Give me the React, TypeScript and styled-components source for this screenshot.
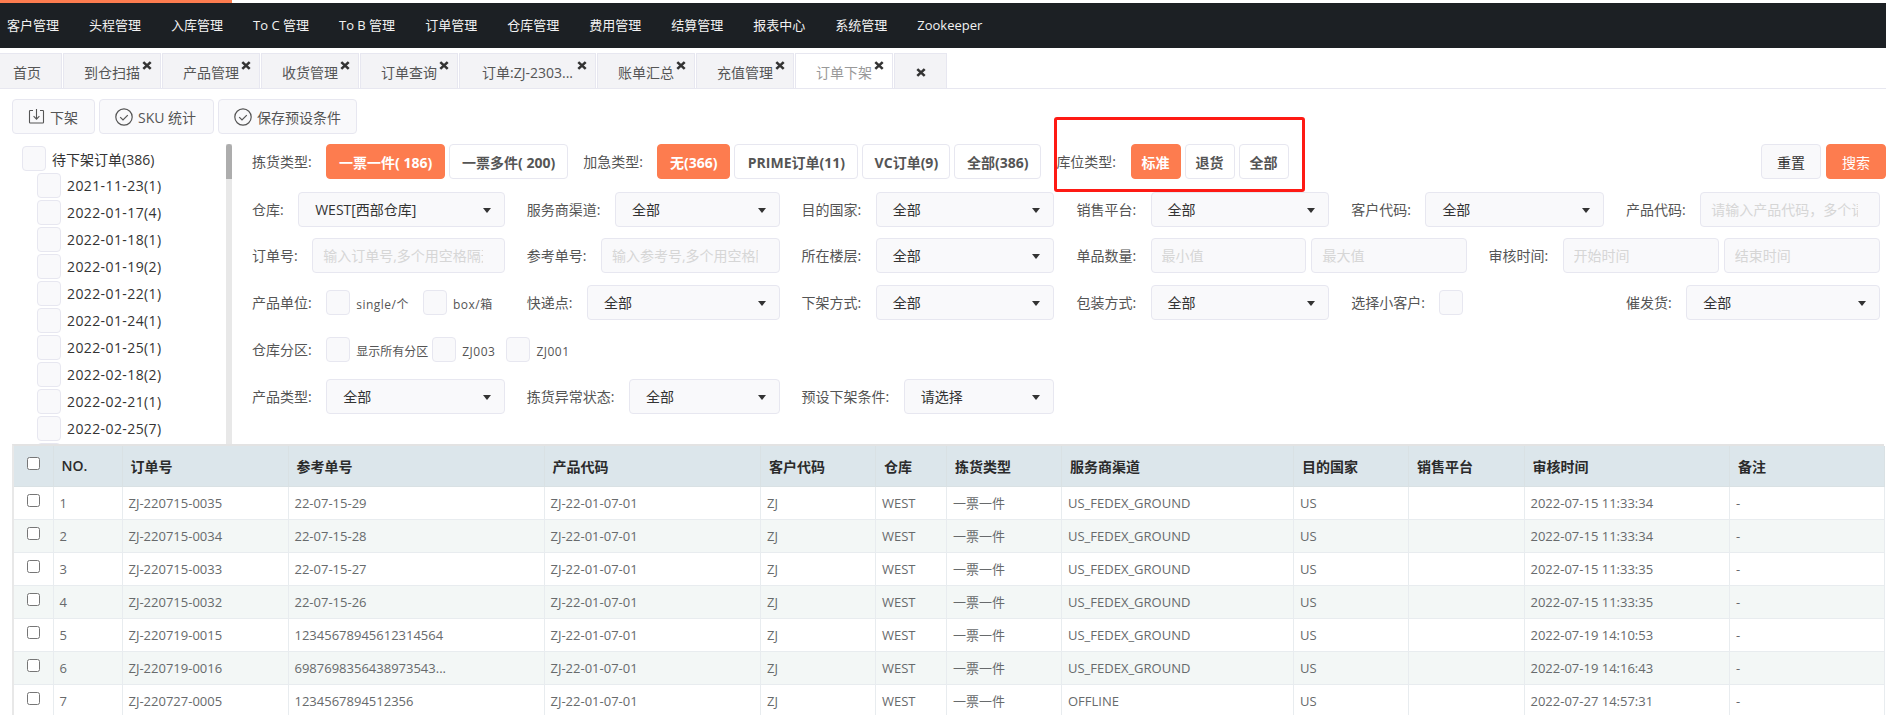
import React from "react";
import styled, { createGlobalStyle } from "styled-components";

const ORANGE = "#fd7c4f";
const LINE = "#e7e7f0";
const FIELD_BG = "#f9f9fb";

const GlobalStyle = createGlobalStyle`
  * {
    box-sizing: border-box;
  }
  html, body {
    margin: 0;
    height: 100%;
    overflow: hidden;
    background: #fff;
  }
  body {
    font-family: "Open Sans", "Noto Sans CJK SC", sans-serif;
    font-size: 14px;
    color: #333;
  }
`;

const menus = ["客户管理", "头程管理", "入库管理", "To C 管理", "To B 管理", "订单管理", "仓库管理", "费用管理", "结算管理", "报表中心", "系统管理", "Zookeeper"];

const tabs = [
  { name: "到仓扫描", width: 98 },
  { name: "产品管理", width: 98 },
  { name: "收货管理", width: 98 },
  { name: "订单查询", width: 98 },
  { name: "订单:ZJ-2303...", width: 137 },
  { name: "账单汇总", width: 98 },
  { name: "充值管理", width: 98 },
  { name: "订单下架", width: 98, active: true },
];

const treeDates = ["2021-11-23(1)", "2022-01-17(4)", "2022-01-18(1)", "2022-01-19(2)", "2022-01-22(1)", "2022-01-24(1)", "2022-01-25(1)", "2022-02-18(2)", "2022-02-21(1)", "2022-02-25(7)"];

const columns = [
  { title: "NO.", width: 69 },
  { title: "订单号", width: 166 },
  { title: "参考单号", width: 256 },
  { title: "产品代码", width: 216.5 },
  { title: "客户代码", width: 115 },
  { title: "仓库", width: 71 },
  { title: "拣货类型", width: 115 },
  { title: "服务商渠道", width: 232 },
  { title: "目的国家", width: 115 },
  { title: "销售平台", width: 115.5 },
  { title: "审核时间", width: 205.5 },
  { title: "备注", width: 155 },
];

const orders = [
  ["ZJ-220715-0035", "22-07-15-29", "US_FEDEX_GROUND", "2022-07-15 11:33:34"],
  ["ZJ-220715-0034", "22-07-15-28", "US_FEDEX_GROUND", "2022-07-15 11:33:34"],
  ["ZJ-220715-0033", "22-07-15-27", "US_FEDEX_GROUND", "2022-07-15 11:33:35"],
  ["ZJ-220715-0032", "22-07-15-26", "US_FEDEX_GROUND", "2022-07-15 11:33:35"],
  ["ZJ-220719-0015", "12345678945612314564", "US_FEDEX_GROUND", "2022-07-19 14:10:53"],
  ["ZJ-220719-0016", "6987698356438973543...", "US_FEDEX_GROUND", "2022-07-19 14:16:43"],
  ["ZJ-220727-0005", "1234567894512356", "OFFLINE", "2022-07-27 14:57:31"],
];

function CloseIcon() {
  return (
    <svg width="10" height="9" viewBox="0 0 10 9">
      <path d="M1.3 1.1 8.7 7.9M8.7 1.1 1.3 7.9" stroke="#333" strokeWidth="2.6" fill="none" />
    </svg>
  );
}

function TrayIcon() {
  return (
    <svg width="17" height="17" viewBox="0 0 17 17" fill="none" stroke="#555" strokeWidth="1.1">
      <path d="M5 2.5H2.2a.7.7 0 0 0-.7.7v11.1c0 .4.3.7.7.7h12.6c.4 0 .7-.3.7-.7V3.2a.7.7 0 0 0-.7-.7H12" />
      <path d="M8.5 1v10M5.6 8.2l2.9 2.9 2.9-2.9" />
    </svg>
  );
}

function CheckCircleIcon() {
  return (
    <svg width="18" height="18" viewBox="0 0 18 18" fill="none" stroke="#555" strokeWidth="1.2">
      <circle cx="9" cy="9" r="8.2" />
      <path d="M5.2 9.2 8 12l4.8-4.8" />
    </svg>
  );
}

function Select({ value }: { value: string }) {
  return <SelectBox>{value}</SelectBox>;
}

function Field({ label, children }: { label: string; children: React.ReactNode }) {
  return (
    <FieldCell>
      <FieldLabel>{label}:</FieldLabel>
      {children}
    </FieldCell>
  );
}

export default function App() {
  return (
    <Page>
      <GlobalStyle />
      <TopAccent />
      <Nav>
        {menus.map((m) => (
          <NavItem key={m}>{m}</NavItem>
        ))}
      </Nav>

      <TabBar>
        <HomeTab $width={62}>首页</HomeTab>
        {tabs.map((t) => (
          <Tab key={t.name} $width={t.width} $active={t.active}>
            {t.name}
            <TabClose>
              <CloseIcon />
            </TabClose>
          </Tab>
        ))}
        <Tab $width={53}>
          <CloseIcon />
        </Tab>
      </TabBar>

      <Toolbar>
        <ToolButton $width={83}>
          <TrayIcon />
          下架
        </ToolButton>
        <ToolButton $width={115}>
          <CheckCircleIcon />
          SKU 统计
        </ToolButton>
        <ToolButton $width={139}>
          <CheckCircleIcon />
          保存预设条件
        </ToolButton>
      </Toolbar>

      <Main>
        <Sidebar>
          <Tree>
            <TreeRow>
              <CheckBox />
              <TreeText>待下架订单(386)</TreeText>
            </TreeRow>
            {treeDates.map((d) => (
              <TreeRow key={d} $child>
                <CheckBox />
                <TreeDate>{d}</TreeDate>
              </TreeRow>
            ))}
            <TreeRow $child>
              <CheckBox />
            </TreeRow>
          </Tree>
          <ScrollTrack>
            <ScrollThumb />
          </ScrollTrack>
        </Sidebar>

        <Filters>
          <ButtonRow>
            <FieldLabel>拣货类型:</FieldLabel>
            <ChoiceGroup>
              <Choice $width={119} $active>一票一件( 186)</Choice>
              <Choice $width={119}>一票多件( 200)</Choice>
            </ChoiceGroup>
            <FieldLabel>加急类型:</FieldLabel>
            <ChoiceGroup>
              <Choice $width={73} $active>无(366)</Choice>
              <Choice $width={124}>PRIME订单(11)</Choice>
              <Choice $width={88}>VC订单(9)</Choice>
              <Choice $width={87}>全部(386)</Choice>
            </ChoiceGroup>
            <FieldLabel>库位类型:</FieldLabel>
            <ChoiceGroup>
              <Choice $width={50} $active>标准</Choice>
              <Choice $width={50}>退货</Choice>
              <Choice $width={50}>全部</Choice>
            </ChoiceGroup>
            <Actions>
              <PlainButton>重置</PlainButton>
              <PrimaryButton>搜索</PrimaryButton>
            </Actions>
          </ButtonRow>

          <FieldRow $after={11}>
            <Field label="仓库"><Select value="WEST[西部仓库]" /></Field>
            <Field label="服务商渠道"><Select value="全部" /></Field>
            <Field label="目的国家"><Select value="全部" /></Field>
            <Field label="销售平台"><Select value="全部" /></Field>
            <Field label="客户代码"><Select value="全部" /></Field>
            <Field label="产品代码"><TextInput placeholder="请输入产品代码，多个请用空格隔开" /></Field>
          </FieldRow>

          <FieldRow>
            <Field label="订单号"><TextInput placeholder="输入订单号,多个用空格隔开" /></Field>
            <Field label="参考单号"><TextInput placeholder="输入参考号,多个用空格隔开" /></Field>
            <Field label="所在楼层"><Select value="全部" /></Field>
            <WideCell>
              <QuantityField>
                <FieldLabel>单品数量:</FieldLabel>
                <RangeInputs>
                  <TextInput placeholder="最小值" />
                  <TextInput placeholder="最大值" />
                </RangeInputs>
              </QuantityField>
              <FieldLabel>审核时间:</FieldLabel>
              <RangeInputs>
                <TextInput placeholder="开始时间" />
                <TextInput placeholder="结束时间" />
              </RangeInputs>
            </WideCell>
          </FieldRow>

          <FieldRow>
            <Field label="产品单位">
              <CheckBox />
              <CheckText $after={14} $spaced>single/个</CheckText>
              <CheckBox />
              <CheckText $spaced>box/箱</CheckText>
            </Field>
            <Field label="快递点"><Select value="全部" /></Field>
            <Field label="下架方式"><Select value="全部" /></Field>
            <Field label="包装方式"><Select value="全部" /></Field>
            <Field label="选择小客户"><CheckBox /></Field>
            <Field label="催发货"><Select value="全部" /></Field>
          </FieldRow>

          <PlainRow>
            <FieldLabel>仓库分区:</FieldLabel>
            <CheckBox />
            <CheckText $after={4}>显示所有分区</CheckText>
            <CheckBox />
            <CheckText $after={11} $spaced>ZJ003</CheckText>
            <CheckBox />
            <CheckText $spaced>ZJ001</CheckText>
          </PlainRow>

          <FieldRow>
            <Field label="产品类型"><Select value="全部" /></Field>
            <Field label="拣货异常状态"><Select value="全部" /></Field>
            <Field label="预设下架条件"><Select value="请选择" /></Field>
          </FieldRow>

          <Highlight />
        </Filters>
      </Main>

      <TableWrap>
        <OrderTable>
          <colgroup>
            <col style={{ width: 39 }} />
            {columns.map((c) => (
              <col key={c.title} style={{ width: c.width }} />
            ))}
          </colgroup>
          <thead>
            <tr>
              <HeadCell>
                <RowCheck type="checkbox" />
              </HeadCell>
              {columns.map((c) => (
                <HeadCell key={c.title}>{c.title}</HeadCell>
              ))}
            </tr>
          </thead>
          <tbody>
            {orders.map((o, i) => (
              <BodyRow key={o[0]} $striped={i % 2 === 1}>
                <BodyCell>
                  <RowCheck type="checkbox" />
                </BodyCell>
                <BodyCell>{i + 1}</BodyCell>
                <BodyCell>{o[0]}</BodyCell>
                <BodyCell>{o[1]}</BodyCell>
                <BodyCell>ZJ-22-01-07-01</BodyCell>
                <BodyCell>ZJ</BodyCell>
                <BodyCell>WEST</BodyCell>
                <BodyCell>一票一件</BodyCell>
                <BodyCell>{o[2]}</BodyCell>
                <BodyCell>US</BodyCell>
                <BodyCell />
                <BodyCell>{o[3]}</BodyCell>
                <BodyCell>-</BodyCell>
              </BodyRow>
            ))}
          </tbody>
        </OrderTable>
      </TableWrap>
    </Page>
  );
}

const Page = styled.div`
  height: 100vh;
  overflow: hidden;
`;

const TopAccent = styled.div`
  width: 232px;
  height: 3px;
  background: ${ORANGE};
`;

const Nav = styled.nav`
  display: flex;
  height: 45px;
  padding-left: 7px;
  background: #1c2024;
`;

const NavItem = styled.a`
  margin-right: 30px;
  line-height: 45px;
  font-size: 13px;
  color: #f2f2f2;
  white-space: nowrap;
`;

const TabBar = styled.div`
  display: flex;
  gap: 1px;
  height: 36px;
  margin-top: 5px;
  border-bottom: 1px solid ${LINE};
`;

const Tab = styled.div<{ $width: number; $active?: boolean }>`
  position: relative;
  display: flex;
  align-items: center;
  justify-content: center;
  width: ${(p) => p.$width}px;
  height: 35px;
  padding-top: 2px;
  border: 1px solid ${LINE};
  border-bottom: 0;
  background: ${(p) => (p.$active ? "#fff" : "#f3f3f6")};
  color: ${(p) => (p.$active ? "#999" : "#555")};
  white-space: nowrap;
`;

const HomeTab = styled(Tab)`
  padding-right: 7px;
  border-left: 0;
`;

const TabClose = styled.span`
  position: absolute;
  top: 7px;
  right: 8px;
  line-height: 0;
`;

const Toolbar = styled.div`
  display: flex;
  gap: 4px;
  padding: 10px 12px;
`;

const ToolButton = styled.button<{ $width: number }>`
  display: flex;
  align-items: center;
  gap: 5px;
  width: ${(p) => p.$width}px;
  height: 35px;
  padding: 0 0 0 15px;
  border: 1px solid ${LINE};
  border-radius: 4px;
  background: ${FIELD_BG};
  font: inherit;
  color: #555;
  white-space: nowrap;
`;

const Main = styled.div`
  display: flex;
  height: 300px;
`;

const Sidebar = styled.aside`
  display: flex;
  flex: 0 0 232px;
  overflow: hidden;
`;

const Tree = styled.div`
  flex: 1;
  padding: 2px 0 0 22px;
  overflow: hidden;
`;

const TreeRow = styled.div<{ $child?: boolean }>`
  display: flex;
  align-items: center;
  gap: 6px;
  height: 25px;
  margin: 0 0 2px ${(p) => (p.$child ? 15 : 0)}px;
`;

const TreeText = styled.span`
  white-space: nowrap;
`;

const TreeDate = styled(TreeText)`
  letter-spacing: 0.4px;
`;

const CheckBox = styled.span`
  flex: 0 0 24px;
  height: 25px;
  border: 1px solid ${LINE};
  border-radius: 4px;
  background: ${FIELD_BG};
`;

const ScrollTrack = styled.div`
  flex: 0 0 6px;
  background: #e8e8e8;
`;

const ScrollThumb = styled.div`
  height: 35px;
  border-radius: 3px 3px 0 0;
  background: #adadad;
`;

const Filters = styled.section`
  position: relative;
  flex: 1;
  padding-left: 20px;
`;

const ButtonRow = styled.div`
  display: flex;
  align-items: center;
  height: 35px;
  margin-bottom: 13px;
`;

const ChoiceGroup = styled.div`
  display: flex;
  gap: 4px;
  margin-right: 15px;
`;

const Choice = styled.button<{ $width: number; $active?: boolean }>`
  width: ${(p) => p.$width}px;
  height: 35px;
  padding: 0;
  border: 1px solid ${(p) => (p.$active ? ORANGE : LINE)};
  border-radius: 4px;
  background: ${(p) => (p.$active ? ORANGE : "#fff")};
  font: inherit;
  font-weight: 700;
  color: ${(p) => (p.$active ? "#fff" : "#555")};
  white-space: nowrap;
`;

const Actions = styled.div`
  display: flex;
  gap: 5px;
  margin-left: auto;
`;

const PlainButton = styled.button`
  width: 60px;
  height: 35px;
  border: 1px solid ${LINE};
  border-radius: 4px;
  background: ${FIELD_BG};
  font: inherit;
  color: #333;
`;

const PrimaryButton = styled(PlainButton)`
  border-color: ${ORANGE};
  background: ${ORANGE};
  color: #fff;
`;

const FieldRow = styled.div<{ $after?: number }>`
  display: grid;
  grid-template-columns: repeat(5, 274.8px) 254px;
  height: 35px;
  margin-bottom: ${(p) => p.$after ?? 12}px;
`;

const FieldCell = styled.div`
  display: flex;
  align-items: center;
  min-width: 0;
  padding-right: 22px;

  &:nth-child(6) {
    padding-right: 0;
  }
`;

const FieldLabel = styled.label`
  flex: none;
  width: fit-content;
  margin-right: 14.5px;
  padding-bottom: 2px;
  color: #555;
  white-space: nowrap;
`;

const SelectBox = styled.div`
  position: relative;
  flex: 1;
  min-width: 0;
  height: 35px;
  padding-left: 16px;
  border: 1px solid ${LINE};
  border-radius: 4px;
  background: ${FIELD_BG};
  line-height: 34px;
  color: #333;

  &::after {
    content: "";
    position: absolute;
    top: 15px;
    right: 13px;
    border-top: 5px solid #333;
    border-left: 4px solid transparent;
    border-right: 4px solid transparent;
  }
`;

const TextInput = styled.input`
  flex: 1;
  width: 0;
  min-width: 0;
  height: 35px;
  padding: 0 21px 0 10px;
  border: 1px solid ${LINE};
  border-radius: 4px;
  background: ${FIELD_BG};
  font: inherit;

  &::placeholder {
    color: #d6d6d6;
    opacity: 1;
  }
`;

const WideCell = styled.div`
  display: flex;
  grid-column: 4 / 7;
  align-items: center;
`;

const QuantityField = styled.div`
  display: flex;
  flex: 0 0 412px;
  align-items: center;
  padding-right: 21px;
`;

const RangeInputs = styled.div`
  display: flex;
  flex: 1;
  gap: 5px;
`;

const CheckText = styled.span<{ $after?: number; $spaced?: boolean }>`
  margin: 0 ${(p) => p.$after ?? 0}px 0 6px;
  padding-top: 3px;
  font-size: 12px;
  letter-spacing: ${(p) => (p.$spaced ? "0.5px" : 0)};
  color: #555;
  white-space: nowrap;
`;

const PlainRow = styled.div`
  display: flex;
  align-items: center;
  height: 35px;
  margin-bottom: 12px;
`;

const Highlight = styled.div`
  position: absolute;
  top: -27px;
  left: 822px;
  width: 251px;
  height: 75px;
  border: 3px solid #fe1a14;
  border-radius: 3px;
  pointer-events: none;
`;

const TableWrap = styled.div`
  margin: 0 2px 0 12px;
  border-top: 2px solid #e3e3e3;
  border-left: 2px solid #e8e8e8;
`;

const OrderTable = styled.table`
  width: 1870.5px;
  table-layout: fixed;
  border-collapse: collapse;
`;

const HeadCell = styled.th`
  height: 40px;
  padding: 0 8px;
  border: 1px solid #d9e1e4;
  border-top: 0;
  background: #dce6eb;
  font-weight: 600;
  text-align: left;
  color: #2b2b2b;
  white-space: nowrap;

  &:first-child {
    border-left: 0;
    padding: 0 0 4px 13px;
  }
`;

const BodyRow = styled.tr<{ $striped: boolean }>`
  background: ${(p) => (p.$striped ? "#f3f7f6" : "#fff")};
`;

const BodyCell = styled.td`
  height: 33px;
  padding: 0 6px;
  border: 1px solid #e8ecef;
  font-size: 13px;
  color: #676a6c;
  white-space: nowrap;
  overflow: hidden;

  &:first-child {
    border-left: 0;
    padding: 0 0 4px 13px;
  }
`;

const RowCheck = styled.input`
  display: block;
  width: 13px;
  height: 13px;
  margin: 0;
  appearance: none;
  border: 1px solid #767676;
  border-radius: 2.5px;
  background: #fff;
`;
